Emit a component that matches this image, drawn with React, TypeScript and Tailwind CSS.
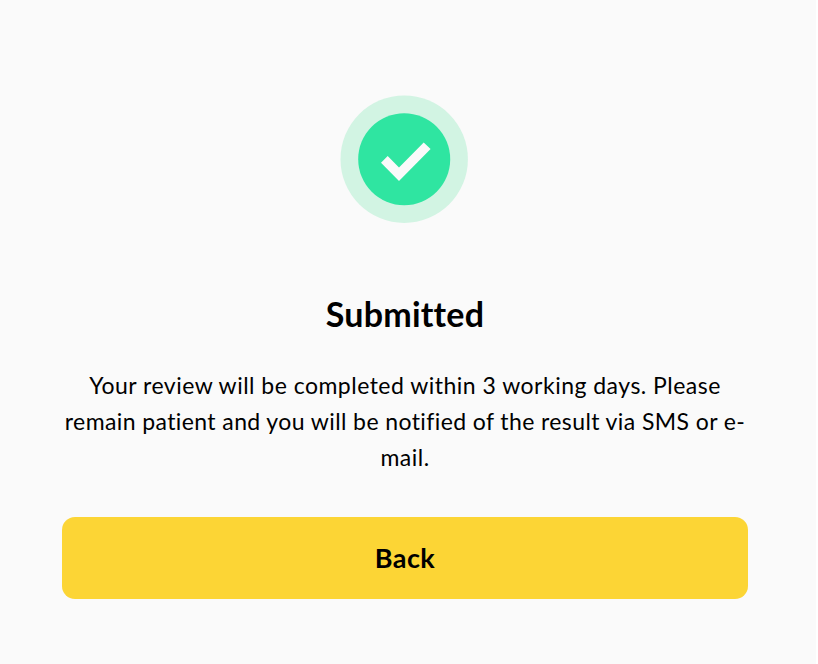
import React from 'react';

function SuccessIcon() {
  return (
    <svg width="128" height="128" viewBox="0 0 128 128" aria-hidden="true">
      <circle cx="64.2" cy="64.2" r="63.7" fill="#d2f4e3" />
      <circle cx="64.2" cy="64.2" r="46" fill="#2fe5a1" />
      <path d="M41 67.7L47.7 61L59 72.4L83.7 47.5L90.6 54.1L59 86Z" fill="#fafafa" />
    </svg>
  );
}

export default function App() {
  return (
    <main className="min-h-screen w-[816px] bg-[#fafafa] pt-[95px] pl-[62px] text-black font-['Lato',sans-serif]">
      <div className="flex w-[686px] flex-col items-center">
        <div className="pr-0.5">
          <SuccessIcon />
        </div>

        <h1 className="mt-[71px] text-[34px] leading-10 font-bold tracking-[0.2px]">
          Submitted
        </h1>

        <p className="mt-[33px] text-center text-[23px] leading-9 tracking-[0.48px] whitespace-nowrap">
          Your review will be completed within 3 working days. Please
          <br />
          <span className="tracking-[0.4px]">
            remain patient and you will be notified of the result via SMS or e-
          </span>
          <br />
          mail.
        </p>

        <button
          type="button"
          className="mt-[42px] h-[82px] w-full rounded-[13px] bg-[#fcd535] text-[27px] font-bold tracking-[0.4px]"
        >
          Back
        </button>
      </div>
    </main>
  );
}
